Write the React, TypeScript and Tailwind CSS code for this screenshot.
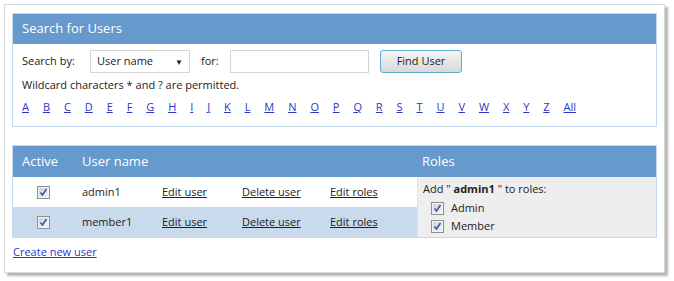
const letters = "ABCDEFGHIJKLMNOPQRSTUVWXYZ".split("");

function Check() {
  return (
    <svg width="13" height="13" viewBox="0 0 13 13" className="block">
      <defs>
        <linearGradient id="cbg" x1="0" y1="0" x2="1" y2="1">
          <stop offset="0" stopColor="#c9d3df" />
          <stop offset="1" stopColor="#f4f6f8" />
        </linearGradient>
      </defs>
      <rect x="0.5" y="0.5" width="12" height="12" fill="#f3f3f3" stroke="#8e8f8f" />
      <rect x="2" y="2" width="9" height="9" fill="url(#cbg)" />
      <path d="M3.5 6.5 L5.5 9 L9.5 3" fill="none" stroke="#3a55a8" strokeWidth="1.6" />
    </svg>
  );
}

export default function App() {
  return (
    <div className="min-h-[281px] w-[674px] bg-white pl-[4px] pt-[4px] text-[11px] text-[#222] [font-family:'Open_Sans',sans-serif]">
      <div className="h-[269px] w-[661px] border border-[#d9d9d9] pl-[7px] pt-[8px] shadow-[3px_3px_2px_rgba(0,0,0,0.28)]">
        {/* search panel */}
        <section className="w-[645px] border border-[#c6d8ee]">
          <div className="flex h-[30px] items-center bg-[#6699cc] pl-[9px] text-[13px] text-white">
            Search for Users
          </div>
          <div className="pl-[9px] pt-[6px] pb-[9px]">
            <div className="flex h-[23px] items-center">
              <span className="w-[68px]">Search by:</span>
              <div className="flex h-[23px] w-[100px] items-center justify-between border border-[#d4d4d4] pl-[6px] pr-[6px]">
                <span>User name</span>
                <span className="text-[8px]">▼</span>
              </div>
              <span className="ml-[11px] w-[29px]">for:</span>
              <div className="h-[23px] w-[139px] border border-[#d4d4d4]" />
              <button className="ml-[11px] h-[23px] w-[82px] rounded-[3px] border border-[#5eaedb] bg-gradient-to-b from-[#f4f4f4] to-[#d9d9d9] text-[11px] text-[#222]">
                Find User
              </button>
            </div>
            <div className="mt-[3px] flex h-[19px] items-center">Wildcard characters * and ? are permitted.</div>
            <div className="mt-[3px] flex h-[19px] w-[554px] items-center justify-between">
              {letters.map((l) => (
                <a key={l} href="#" className="text-[#2b36c9] underline">
                  {l}
                </a>
              ))}
              <a href="#" className="text-[#2b36c9] underline">All</a>
            </div>
          </div>
        </section>

        {/* users table */}
        <section className="mt-[18px] w-[645px] border border-[#c6d8ee]">
          <div className="flex h-[31px] items-center bg-[#6699cc] text-[13px] text-white">
            <span className="w-[69px] pl-[9px]">Active</span>
            <span className="w-[335px]">User name</span>
            <span className="pl-[5px]">Roles</span>
          </div>
          <div className="flex">
            <div className="w-[404px]">
              {[
                { name: "admin1", bg: "bg-white" },
                { name: "member1", bg: "bg-[#c9daed]" },
              ].map((r) => (
                <div key={r.name} className={`flex h-[30px] items-center ${r.bg}`}>
                  <div className="flex w-[61px] justify-center">
                    <Check />
                  </div>
                  <span className="w-[88px] pl-[8px]">{r.name}</span>
                  <a href="#" className="w-[80px] text-[#222] underline">Edit user</a>
                  <a href="#" className="w-[88px] text-[#222] underline">Delete user</a>
                  <a href="#" className="text-[#222] underline">Edit roles</a>
                </div>
              ))}
            </div>
            <div className="h-[60px] flex-1 border-l border-[#dde3ea] bg-[#eeeeee] pl-[5px] pt-[3px]">
              <div className="leading-[18px]">
                Add " <b>admin1</b> " to roles:
              </div>
              <div className="mt-[1px] flex items-center gap-[7px] pl-[8px] leading-[18px]">
                <Check />
                <span>Admin</span>
              </div>
              <div className="flex items-center gap-[7px] pl-[8px] leading-[18px]">
                <Check />
                <span>Member</span>
              </div>
            </div>
          </div>
        </section>

        <a href="#" className="mt-[6px] ml-[1px] inline-block text-[#2b36c9] underline">Create new user</a>
      </div>
    </div>
  );
}
